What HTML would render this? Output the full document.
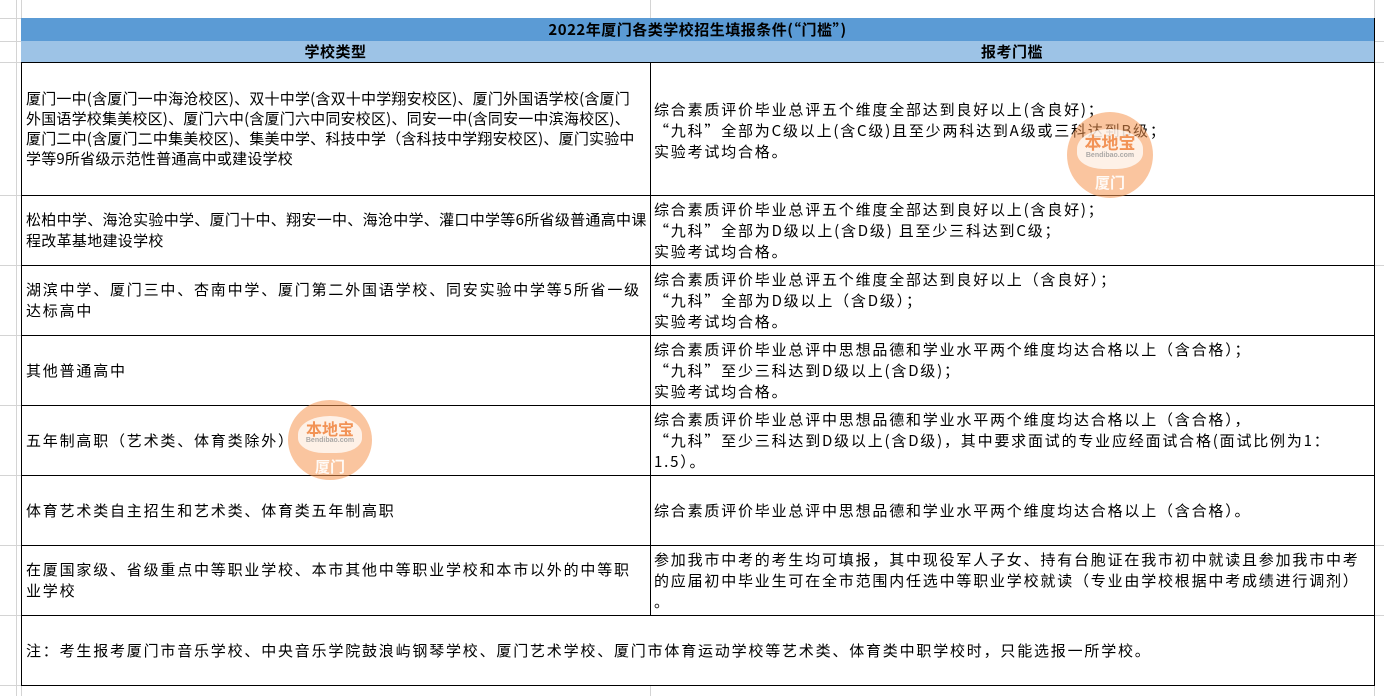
<!DOCTYPE html>
<html><head><meta charset="utf-8"><style>
body{margin:0;width:1384px;height:696px;background:#fff;position:relative;overflow:hidden;font-family:"WenQuanYi Zen Hei","Noto Sans CJK SC","Liberation Sans",sans-serif;color:#000}
.g{position:absolute;background:#d4d4d4}
.c{position:absolute;box-sizing:border-box;display:flex;align-items:center;font-size:15px;letter-spacing:1.8px;line-height:21px;white-space:nowrap;border-right:1px solid #000;border-bottom:1px solid #000;overflow:hidden}
.l{left:21px;width:630px;padding-left:5px}
.r{left:650px;width:725px;padding-left:4px}
.h{justify-content:center;font-weight:bold;letter-spacing:0.5px}
.wm{position:absolute;border-radius:50%;background:rgba(245,150,80,.55);overflow:hidden}
.wm .in{position:absolute;left:12%;top:20%;width:76%;height:46%;border-radius:50% 50% 40% 40%;background:rgba(255,255,255,.75)}
.wm .t1{position:absolute;width:100%;top:20%;text-align:center;color:rgba(240,130,60,.85);font-weight:bold}
.wm .t2{position:absolute;width:100%;top:46%;text-align:center;color:rgba(150,150,150,.8);font-weight:bold;font-family:"Liberation Sans",sans-serif}
.wm .t3{position:absolute;width:100%;top:70%;text-align:center;color:rgba(255,255,255,.9);font-weight:bold}
</style></head><body>
<div class="g" style="left:0;top:18px;width:21px;height:1px"></div>
<div class="g" style="left:0;top:41px;width:21px;height:1px"></div>
<div class="g" style="left:0;top:62px;width:21px;height:1px"></div>
<div class="g" style="left:0;top:195px;width:21px;height:1px"></div>
<div class="g" style="left:0;top:265px;width:21px;height:1px"></div>
<div class="g" style="left:0;top:335px;width:21px;height:1px"></div>
<div class="g" style="left:0;top:405px;width:21px;height:1px"></div>
<div class="g" style="left:0;top:475px;width:21px;height:1px"></div>
<div class="g" style="left:0;top:545px;width:21px;height:1px"></div>
<div class="g" style="left:0;top:615px;width:21px;height:1px"></div>
<div class="g" style="left:0;top:685px;width:21px;height:1px"></div>
<div class="g" style="left:16px;top:0;width:1px;height:696px"></div>
<div class="g" style="left:21px;top:0;width:1px;height:18px"></div>
<div class="g" style="left:650px;top:0;width:1px;height:18px"></div>
<div class="g" style="left:650px;top:685px;width:1px;height:11px"></div>
<div class="g" style="left:21px;top:685px;width:1px;height:11px"></div>
<div class="g" style="left:1374px;top:0;width:1px;height:696px"></div>
<div class="g" style="left:1375px;top:41px;width:9px;height:1px"></div>
<div class="g" style="left:1375px;top:62px;width:9px;height:1px"></div>
<div class="g" style="left:1375px;top:265px;width:9px;height:1px"></div>
<div class="g" style="left:1375px;top:545px;width:9px;height:1px"></div>
<div class="g" style="left:1375px;top:615px;width:9px;height:1px"></div>
<div style="position:absolute;left:21px;top:18px;width:1354px;height:668px;box-sizing:border-box;border-left:1px solid #000;border-top:1px solid #000"></div>

<div class="c h" style="left:21px;top:18px;width:1354px;height:24px;background:#5b9bd5;font-size:15px">2022年厦门各类学校招生填报条件(“门槛”)</div>
<div class="c h l" style="top:41px;height:22px;background:#9dc3e6;padding:0;font-size:15px">学校类型</div>
<div class="c h r" style="top:41px;height:22px;background:#9dc3e6;padding:0;font-size:15px">报考门槛</div>

<div class="c l" style="top:62px;height:134px;line-height:20px;letter-spacing:0.2px">厦门一中(含厦门一中海沧校区)、双十中学(含双十中学翔安校区)、厦门外国语学校(含厦门<br>外国语学校集美校区)、厦门六中(含厦门六中同安校区)、同安一中(含同安一中滨海校区)、<br>厦门二中(含厦门二中集美校区)、集美中学、科技中学（含科技中学翔安校区)、厦门实验中<br>学等9所省级示范性普通高中或建设学校</div>
<div class="c r" style="top:62px;height:134px;padding-top:4px">综合素质评价毕业总评五个维度全部达到良好以上(含良好)；<br>“九科”全部为C级以上(含C级)且至少两科达到A级或三科达到B级；<br>实验考试均合格。</div>

<div class="c l" style="top:195px;height:71px;letter-spacing:0.3px">松柏中学、海沧实验中学、厦门十中、翔安一中、海沧中学、灌口中学等6所省级普通高中课<br>程改革基地建设学校</div>
<div class="c r" style="top:195px;height:71px">综合素质评价毕业总评五个维度全部达到良好以上(含良好)；<br>“九科”全部为D级以上(含D级) 且至少三科达到C级；<br>实验考试均合格。</div>

<div class="c l" style="top:265px;height:71px">湖滨中学、厦门三中、杏南中学、厦门第二外国语学校、同安实验中学等5所省一级<br>达标高中</div>
<div class="c r" style="top:265px;height:71px">综合素质评价毕业总评五个维度全部达到良好以上（含良好）；<br>“九科”全部为D级以上（含D级）；<br>实验考试均合格。</div>

<div class="c l" style="top:335px;height:71px">其他普通高中</div>
<div class="c r" style="top:335px;height:71px">综合素质评价毕业总评中思想品德和学业水平两个维度均达合格以上（含合格）；<br>“九科”至少三科达到D级以上(含D级)；<br>实验考试均合格。</div>

<div class="c l" style="top:405px;height:71px">五年制高职（艺术类、体育类除外）</div>
<div class="c r" style="top:405px;height:71px">综合素质评价毕业总评中思想品德和学业水平两个维度均达合格以上（含合格），<br>“九科”至少三科达到D级以上(含D级)，其中要求面试的专业应经面试合格(面试比例为1：<br>1.5）。</div>

<div class="c l" style="top:475px;height:71px">体育艺术类自主招生和艺术类、体育类五年制高职</div>
<div class="c r" style="top:475px;height:71px">综合素质评价毕业总评中思想品德和学业水平两个维度均达合格以上（含合格）。</div>

<div class="c l" style="top:545px;height:71px">在厦国家级、省级重点中等职业学校、本市其他中等职业学校和本市以外的中等职<br>业学校</div>
<div class="c r" style="top:545px;height:71px">参加我市中考的考生均可填报，其中现役军人子女、持有台胞证在我市初中就读且参加我市中考<br>的应届初中毕业生可在全市范围内任选中等职业学校就读（专业由学校根据中考成绩进行调剂）<br>。</div>

<div class="c" style="left:21px;top:615px;width:1354px;height:71px;padding-left:5px">注：考生报考厦门市音乐学校、中央音乐学院鼓浪屿钢琴学校、厦门艺术学校、厦门市体育运动学校等艺术类、体育类中职学校时，只能选报一所学校。</div>

<div class="wm" style="left:1067px;top:112px;width:86px;height:86px"><div class="in"></div><div class="t1" style="font-size:17px">本地宝</div><div class="t2" style="font-size:7px">Bendibao.com</div><div class="t3" style="font-size:15px">厦门</div></div>
<div class="wm" style="left:288px;top:400px;width:84px;height:80px"><div class="in"></div><div class="t1" style="font-size:16px">本地宝</div><div class="t2" style="font-size:7px">Bendibao.com</div><div class="t3" style="font-size:15px">厦门</div></div>
</body></html>
